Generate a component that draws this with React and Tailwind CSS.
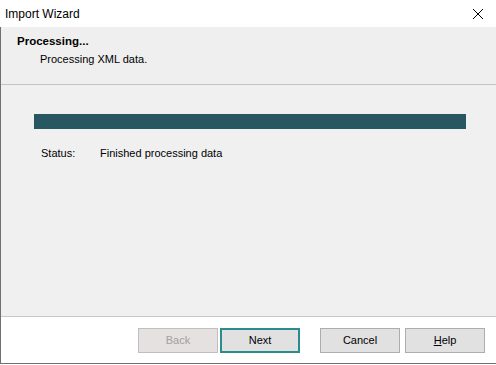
export default function App() {
  const font = { fontFamily: '"Liberation Sans", "Noto Sans", sans-serif' };
  return (
    <div className="w-[496px] h-[365px] bg-white flex flex-col text-[11px] text-black overflow-hidden" style={font}>
      <div className="h-[27px] flex items-center justify-between pl-[5px] pr-[12px] bg-white shrink-0">
        <span className="leading-none text-[12px]">Import Wizard</span>
        <svg width="12" height="12" viewBox="0 0 12 12" className="shrink-0">
          <path d="M1 1 L11 11 M11 1 L1 11" stroke="#000" strokeWidth="1" />
        </svg>
      </div>
      <div className="flex-1 flex flex-col border-l border-b border-[#707070] mb-[1px]">
        <div className="h-[58px] bg-[#efefef] border-b border-[#c4c4c4] shrink-0 pl-[16px] pt-[6px]">
          <div className="font-bold leading-[16px] text-[11.5px]">Processing...</div>
          <div className="pl-[23px] mt-[2px] leading-[16px]">Processing XML data.</div>
        </div>
        <div className="flex-1 bg-[#f0f0f0] border-b border-[#c8c8c8] pl-[33px] pr-[30px] pt-[29px]">
          <div className="h-[15px] bg-[#285661]" />
          <div className="flex mt-[16px] leading-[16px]">
            <span className="ml-[7px] w-[59px] shrink-0">Status:</span>
            <span>Finished processing data</span>
          </div>
        </div>
        <div className="h-[46px] bg-white shrink-0 flex items-center justify-end pr-[11px] pt-[1px]">
          <button className="w-[80px] h-[25px] border border-[#bfbfbf] bg-[#e5e1e1] text-[#a0a0a0] mr-[2px]">Back</button>
          <button className="w-[80px] h-[25px] border-2 border-[#2a8c8c] bg-[#e1e1e1] mr-[20px]">Next</button>
          <button className="w-[80px] h-[25px] border border-[#adadad] bg-[#e1e1e1] mr-[5px]">Cancel</button>
          <button className="w-[80px] h-[25px] border border-[#adadad] bg-[#e1e1e1]"><span className="underline">H</span>elp</button>
        </div>
      </div>
    </div>
  );
}
